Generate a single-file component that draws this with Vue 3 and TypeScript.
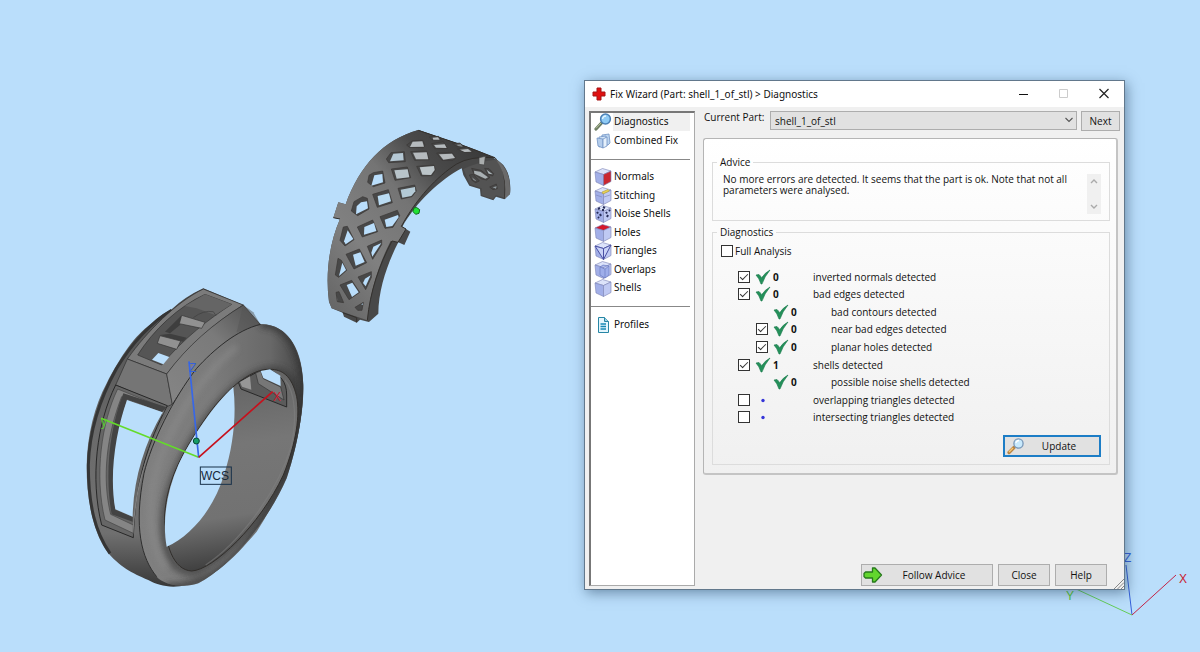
<script setup lang="ts">
import { ref } from 'vue'

interface NavItem { label: string; icon: string; sep?: boolean }
interface Check { label: string; value: string; box: boolean; checked: boolean; sub: boolean; ok: boolean }
interface Cell { rim: string; gap: string; tone: string }

const nav: NavItem[] = [
  { label: 'Diagnostics', icon: 'lens' },
  { label: 'Combined Fix', icon: 'stack' },
  { label: '', icon: '', sep: true },
  { label: 'Normals', icon: 'normals' },
  { label: 'Stitching', icon: 'stitching' },
  { label: 'Noise Shells', icon: 'noise' },
  { label: 'Holes', icon: 'holes' },
  { label: 'Triangles', icon: 'triangles' },
  { label: 'Overlaps', icon: 'overlaps' },
  { label: 'Shells', icon: 'shells' },
  { label: '', icon: '', sep: true },
  { label: 'Profiles', icon: 'page' },
]

const active = ref('Diagnostics')
const part = ref('shell_1_of_stl')
const full = ref(false)

const checks = ref<Check[]>([
  { label: 'inverted normals detected', value: '0', box: true, checked: true, sub: false, ok: true },
  { label: 'bad edges detected', value: '0', box: true, checked: true, sub: false, ok: true },
  { label: 'bad contours detected', value: '0', box: false, checked: false, sub: true, ok: true },
  { label: 'near bad edges detected', value: '0', box: true, checked: true, sub: true, ok: true },
  { label: 'planar holes detected', value: '0', box: true, checked: true, sub: true, ok: true },
  { label: 'shells detected', value: '1', box: true, checked: true, sub: false, ok: true },
  { label: 'possible noise shells detected', value: '0', box: false, checked: false, sub: true, ok: true },
  { label: 'overlapping triangles detected', value: '', box: true, checked: false, sub: false, ok: false },
  { label: 'intersecting triangles detected', value: '', box: true, checked: false, sub: false, ok: false },
])

const sky = '#badefb'
const pale = '#b5babd'
const cells: Cell[] = [
  { rim: '358,66 386,64 394,74 366,74', gap: '368,68 384,67 389,74 370,74', tone: pale },
  { rim: '290,90 308,77 338,76 345,90 340,98 298,97', gap: '308,80 337,79 342,95 300,96', tone: pale },
  { rim: '365,86 400,80 412,100 374,101', gap: '372,90 404,88 410,99 378,98', tone: pale },
  { rim: '428,86 450,84 464,97 440,94', gap: '440,89 452,88 458,95 444,93', tone: '#858a8d' },
  { rim: '442,102 470,96 490,110 464,112', gap: '450,104 474,102 485,110 464,111', tone: pale },
  { rim: '229,132 243,113 283,110 286,140 236,143', gap: '250,116 279,114 281,136 240,139', tone: '#b5c8d4' },
  { rim: '302,110 350,108 358,134 314,136', gap: '309,113 350,112 355,133 318,133', tone: pale },
  { rim: '380,114 426,112 438,128 428,136 396,136', gap: '387,118 426,116 435,129 400,134', tone: pale },
  { rim: '173,202 177,181 190,173 218,168 225,204 190,215', gap: '193,181 217,177 219,202 184,212', tone: sky },
  { rim: '244,162 292,156 302,188 255,196', gap: '253,166 293,163 298,187 260,191', tone: '#b8c4ca' },
  { rim: '320,154 372,150 376,165 366,182 334,183', gap: '329,157 372,153 374,165 363,180 337,179', tone: '#bcc5c9' },
  { rim: '124,288 132,260 158,245 172,250 177,282 143,302', gap: '140,274 153,262 171,259 174,280 138,298', tone: sky },
  { rim: '188,238 235,224 247,263 202,277', gap: '203,243 237,235 243,259 207,271', tone: '#badbf2' },
  { rim: '264,220 314,210 319,228 306,245 274,252', gap: '272,224 315,216 316,229 304,243 277,248', tone: '#b4cad6' },
  { rim: '90,376 100,336 112,334 132,374 105,393', gap: '113,346 130,372 107,388 102,379', tone: sky },
  { rim: '142,336 188,315 203,350 157,366', gap: '163,336 192,324 199,348 162,359', tone: sky },
  { rim: '210,305 262,286 269,302 249,337 225,340', gap: '224,314 264,300 266,307 247,333 229,336', tone: sky },
  { rim: '76,480 84,430 94,436 110,466 86,487', gap: '97,443 108,465 87,483', tone: sky },
  { rim: '108,418 148,402 170,443 132,462', gap: '129,419 151,412 164,441 137,452', tone: sky },
  { rim: '172,394 215,375 215,389 188,433', gap: '190,395 214,384 187,425 184,413', tone: sky },
  { rim: '90,510 125,496 149,532 117,554', gap: '110,510 127,503 146,532 126,546', tone: sky },
  { rim: '144,486 184,470 184,487 167,524', gap: '165,491 182,481 167,514 159,504', tone: sky },
  { rim: '78,532 87,530 101,563 82,560', gap: '80,542 85,558 81,556', tone: '#555' },
  { rim: '135,577 160,562 156,586 143,586', gap: '154,568 158,565 158,570', tone: sky },
  { rim: '478,180 490,178 508,198 497,203 486,196', gap: '486,187 500,198 490,195', tone: '#878c8f' },
  { rim: '485,160 513,166 540,187 530,195 515,192 492,177', gap: '492,167 511,170 534,187 526,191 493,176', tone: '#a9b0b3' },
  { rim: '524,160 537,161 551,176 548,183 533,178', gap: '530,164 548,178 536,176', tone: '#aeb8bd' },
  { rim: '539,216 559,207 562,221 549,224', gap: '548,217 560,214 558,221', tone: '#939da2' },
]
</script>

<template>
  <main class="desk">
    <svg class="scene" viewBox="0 0 1200 652" preserveAspectRatio="xMinYMin slice" aria-hidden="true">
      <defs>
        <linearGradient id="side" x1="0" y1="0" x2="0" y2="1">
          <stop offset="0" stop-color="#4c4c4c" /><stop offset=".5" stop-color="#6b6b6b" /><stop offset=".82" stop-color="#707070" /><stop offset="1" stop-color="#383838" />
        </linearGradient>
        <linearGradient id="rim" x1="0" y1="0" x2="1" y2="0">
          <stop offset="0" stop-color="#808080" /><stop offset=".45" stop-color="#7b7b7b" /><stop offset=".8" stop-color="#686868" /><stop offset="1" stop-color="#454545" />
        </linearGradient>
        <linearGradient id="inner" x1=".2" y1="0" x2=".3" y2="1">
          <stop offset="0" stop-color="#606060" /><stop offset=".4" stop-color="#767676" /><stop offset=".75" stop-color="#727272" /><stop offset="1" stop-color="#3e3e3e" />
        </linearGradient>
        <linearGradient id="bevel" x1="0" y1="1" x2="1" y2="0">
          <stop offset="0" stop-color="#858585" /><stop offset=".6" stop-color="#7a7a7a" /><stop offset="1" stop-color="#4d4d4d" />
        </linearGradient>
        <linearGradient id="band" x1="0" y1="1" x2="1" y2="0">
          <stop offset="0" stop-color="#626262" /><stop offset=".3" stop-color="#808080" /><stop offset=".55" stop-color="#747474" /><stop offset=".72" stop-color="#4a4a4a" /><stop offset="1" stop-color="#333" />
        </linearGradient>
        <filter id="shade" x="-20%" y="-20%" width="140%" height="140%"><feGaussianBlur stdDeviation="9" /></filter>
        <clipPath id="rimClip">
          <path d="M572 148C500 165 430 225 380 280C310 370 245 500 222 595C190 760 215 850 260 905C280 930 345 940 385 925C470 880 590 750 650 610C690 490 700 390 700 330C695 220 650 145 572 148Z" />
        </clipPath>
      </defs>

      <svg x="70" y="275" width="250" height="325" viewBox="0 0 750 975">
        <path fill="url(#side)" d="M400 40L520 90L572 148C660 150 700 230 700 340C700 480 645 640 560 770C490 850 420 930 310 935C280 934 255 925 245 920C190 895 160 885 115 835C65 770 50 660 50 580C50 480 75 390 110 325C150 245 200 175 240 150Q270 120 305 103Q345 65 400 40Z" />
        <path fill="none" stroke="#353535" stroke-width="9" d="M305 106C245 140 185 205 140 280C90 370 58 460 55 570C55 690 75 770 120 835" />
        <path fill="#7b7b7b" d="M400 42L520 90C430 145 350 220 290 297L172 252C230 170 320 80 400 42Z" stroke="#292929" stroke-width="2" />
        <path fill="#555" stroke="#333" stroke-width="2" d="M405 58L485 88C420 130 340 190 275 270L203 240C250 165 325 95 405 58Z" />
        <path fill="#656565" d="M405 58L485 88L435 120L380 100L345 93Z" />
        <path fill="none" stroke="#3e3e3e" stroke-width="2" d="M370 128Q400 105 430 110L438 122" />
        <path fill="#3e3e3e" d="M270 180L300 176L350 188L338 200ZM335 121L330 150L300 175L285 170Z" />
        <path fill="#919191" stroke="#333" stroke-width="2" d="M335 121L405 142L395 160L328 146ZM270 182L332 198L320 223L262 205Z" />
        <path :fill="sky" d="M265 234L298 246L280 268L246 254Z" />
        <path fill="#757575" stroke="#2e2e2e" stroke-width="2" d="M172 252L290 297L307 388L290 395L137 330Z" />
        <path fill="url(#bevel)" stroke="#303030" stroke-width="2" d="M290 297C350 215 430 145 520 90L572 150C470 175 390 260 307 388Z" />
        <path fill="#555" d="M520 90L550 112L572 150L500 172Z" opacity=".5" />
        <path fill="#666" stroke="#282828" stroke-width="3" d="M137 330L292 392C235 500 195 620 190 788L95 750C60 610 80 445 137 330Z" />
        <path fill="#858585" stroke="#444" stroke-width="2" d="M143 342L286 400L278 420L155 365C110 480 95 610 122 718L190 750V775L105 735C72 600 95 440 143 342Z" />
        <path fill="#434343" d="M160 355L290 397L276 412L171 373C142 480 120 590 136 704L188 726V740L125 718C105 610 115 470 160 355Z" />
        <path :fill="sky" d="M171 375L278 412C220 510 190 620 188 725L136 703C117 600 137 470 171 375Z" />
        <path fill="#808080" d="M307 388C250 480 197 610 189 745L190 788C195 640 237 500 310 388Z" />

        <path fill="url(#rim)" d="M572 148C500 165 430 225 380 280C310 370 245 500 222 595C190 760 215 850 260 905C280 930 345 940 385 925C470 880 590 750 650 610C690 490 700 390 700 330C695 220 650 145 572 148Z" />
        <g clip-path="url(#rimClip)">
          <path filter="url(#shade)" fill="none" stroke="#303030" stroke-width="24" d="M600 285C480 300 320 530 288 690C270 810 300 900 380 890C480 840 610 680 670 520C710 350 665 285 600 285" opacity=".6" />
          <path filter="url(#shade)" fill="none" stroke="#303030" stroke-width="20" d="M572 148C650 145 700 230 700 335C700 490 620 690 520 820C460 890 380 940 290 935" opacity=".8" />
          <path filter="url(#shade)" fill="none" stroke="#8c8c8c" stroke-width="18" d="M500 215C380 310 265 500 245 660C235 760 255 830 290 880" opacity=".65" />
        </g>
        <path fill="none" stroke="#2d2d2d" stroke-width="3" d="M572 148C500 165 430 225 380 280C310 370 245 500 222 595C190 760 215 850 260 905" />
        <path fill="url(#inner)" stroke="#302d2a" stroke-width="3" d="M600 283C540 280 460 350 400 440C335 535 290 620 284 720C284 810 310 885 365 888C430 885 570 750 640 600C680 500 690 420 680 365C665 300 635 283 600 283Z" />
        <path fill="none" stroke="#828282" stroke-width="4" d="M645 315C675 350 682 430 663 515C620 660 500 810 407 870" opacity=".5" />
        <path :fill="sky" d="M490 336C430 390 360 495 325 570C290 650 276 740 290 815C360 785 430 705 462 600C490 515 500 420 490 336Z" />
        <path fill="#5b5b5b" stroke="#292929" stroke-width="3" d="M505 322L513 342L650 396V360C650 320 630 300 600 284L560 292Z" />
        <path fill="#969696" d="M510 321L540 304L544 344L516 335Z" />
        <path fill="#777" stroke="#353535" stroke-width="2" d="M557 294L572 288L580 311L632 336L642 375L565 326Z" />
        <path :fill="sky" d="M572 288L600 283L631 302L632 333L580 309Z" />

        <path stroke="#64db2a" stroke-width="5" d="M93 430L386 547" />
        <path stroke="#3767e8" stroke-width="5" d="M357 259L386 547" />
        <path stroke="#c7101c" stroke-width="5" d="M386 547L608 350" />
        <circle cx="379" cy="498" r="9" fill="#159c68" stroke="#064833" stroke-width="3" />
        <rect x="391" y="576" width="93" height="52" fill="none" stroke="#173049" stroke-width="3" />
      </svg>

      <text class="axis blue" x="189" y="372">Z</text>
      <text class="axis red" x="273" y="401">X</text>
      <text class="axis green" x="101" y="426">y</text>
      <text class="wcs" x="201" y="480">WCS</text>

      <svg x="310" y="115" width="220" height="220" viewBox="0 0 660 660">
        <path fill="#484848" d="M325 45C220 75 150 150 107 268L85 262L70 308L90 312C60 380 45 470 57 560L65 580L98 593L102 605L140 623L150 614L177 621L205 596C205 520 235 440 265 382L283 390L301 350L277 335C320 260 390 195 455 160L460 180L478 212L510 222L512 243L550 256L558 245L583 253L600 237Q606 185 580 150Q550 120 450 88Z" />
        <path fill="url(#band)" d="M325 45C220 75 150 150 107 268L85 262L70 308L90 312C60 380 45 470 57 560L65 580L172 616C180 530 205 450 242 378L264 382L288 342L274 334C320 250 380 185 440 147Q480 123 555 128L450 88Z" />
        <path fill="#535353" d="M460 162Q505 140 555 134Q590 150 597 190L584 248L558 241L548 252L515 240V220L480 208Z" />
        <path fill="none" stroke="#33302d" stroke-width="3" d="M172 616C180 530 208 450 246 378L264 382L288 342L274 334C320 250 380 185 440 147Q480 123 555 128Q592 160 584 252M325 46L450 88L555 128M70 308L90 312M98 593L140 608V622" />
        <path fill="#6a6a6a" d="M555 130Q605 165 600 237L584 252Q594 180 555 130Z" />
        <path fill="#aaadad" stroke="#414141" stroke-width="2" d="M507 128L526 124L523 150L507 148Z" />
        <g v-for="(c, i) in cells" :key="i">
          <polygon :points="c.rim" fill="#484848" stroke="#393735" stroke-width="2" />
          <polygon :points="c.gap" :fill="c.tone" />
        </g>
        <path d="M319 277L329 284L327 295L317 298L309 290L311 280Z" fill="#20e335" stroke="#116f1c" stroke-width="3" />
      </svg>

      <g fill="none" stroke-width="1">
        <path stroke="#3560da" d="M1126 565L1132 615" />
        <path stroke="#64cd58" d="M1074 588L1132 615" />
        <path stroke="#c32345" d="M1132 615L1176 575" />
      </g>
      <text class="axis blue" x="1124" y="562">Z</text>
      <text class="axis green" x="1066" y="600">Y</text>
      <text class="axis red" x="1179" y="583">X</text>
    </svg>

    <section class="dialog" aria-label="Fix Wizard">
      <header class="bar">
        <svg class="cross" viewBox="0 0 14 14"><path d="M5 1H9V5H13V9H9V13H5V9H1V5H5Z" fill="#e01010" stroke="#a51515" /></svg>
        <h1>Fix Wizard (Part: shell_1_of_stl) &gt; Diagnostics</h1>
        <button class="win" aria-label="Minimize"><svg viewBox="0 0 12 12"><path d="M1 6.500H10" stroke="#111" /></svg></button>
        <button class="win" aria-label="Maximize" disabled><svg viewBox="0 0 12 12"><path d="M1.500 1.500H9.500V9.500H1.500Z" fill="none" stroke="#ccc" /></svg></button>
        <button class="win" aria-label="Close window"><svg viewBox="0 0 12 12"><path d="M1.500 1L10.500 10M10.500 1L1.500 10" stroke="#222" stroke-width="1.200" /></svg></button>
      </header>

      <div class="body">
        <nav class="side">
          <div class="list">
            <template v-for="(n, i) in nav" :key="i">
              <hr v-if="n.sep">
              <button v-else class="item" :class="{ on: active === n.label }" @click="active = n.label">
                <svg viewBox="0 0 18 18">
                  <g v-if="n.icon === 'lens'">
                    <path d="M2 16L8 9.500" stroke="#6d7d62" stroke-width="3.200" stroke-linecap="round" />
                    <path d="M2 15.300L7 10" stroke="#b5c29a" stroke-width="1" />
                    <circle cx="11.500" cy="6" r="4.900" fill="#8fcbf5" stroke="#4b80b5" stroke-width="1.500" />
                    <path d="M8.500 6Q9 3 12 3" stroke="#e4f5ff" stroke-width="1.300" fill="none" />
                  </g>
                  <g v-else-if="n.icon === 'stack'" stroke="#7193c4" stroke-width=".8" stroke-linejoin="round">
                    <path d="M8 3L15 2L16 11L14 13L7 13Z" fill="#bcd5f0" />
                    <path d="M5 5L12 4V13L5 15Z" fill="#d4e6f8" />
                    <path d="M3 6L9 7V16L4 14Z" fill="#b4cdec" />
                    <path d="M9 7L13 5V14L9 16Z" fill="#e5f0fb" />
                  </g>
                  <g v-else-if="n.icon === 'page'">
                    <path d="M4.500 1.500H10.500L14.500 5.500V16.500H4.500Z" fill="#e4f6fd" stroke="#2786a5" />
                    <path d="M10.500 1.500V5.500H14.500" fill="#9cd0e2" stroke="#2786a5" />
                    <path d="M6.500 8H12M6.500 10.500H12M6.500 13H12" stroke="#1789b5" stroke-width="1.300" />
                  </g>
                  <g v-else stroke-linejoin="round" stroke="#7b82b4" stroke-width=".6">
                    <path d="M1 4L8.500 .500L17 3L9.500 6.500Z" :fill="n.icon === 'holes' ? '#d4182c' : '#dce3fa'" />
                    <path d="M1 4L9.500 6.500V17.500L2 14Z" fill="#a2afe8" />
                    <path d="M9.500 6.500L17 3V13.500L9.500 17.500Z" :fill="n.icon === 'normals' ? '#c92831' : '#bfc9f3'" />
                    <g v-if="n.icon === 'stitching'">
                      <path d="M8 5L14 2.500L15.500 4L9 7Z" fill="#ecd453" stroke="#a9983f" />
                      <path d="M2 8L8 10M10 10L16 8" />
                    </g>
                    <path v-if="n.icon === 'noise'" d="M4 4L6 3M9 2L11 3M8 5L10 5M3 7L4 8.500M6 9L7 11M4 12L5 13M12 7L13 8.500M13 12L14 10M15 5L16 6" stroke="#272d59" stroke-width="2" />
                    <path v-if="n.icon === 'triangles'" d="M1 4L9.500 17.500L17 3L9.500 6.500ZM9.500 6.500V17.500" fill="#c9d2f7" stroke="#4a50a4" stroke-width="1" />
                    <path v-if="n.icon === 'overlaps'" d="M6 6L9 4L15 5V14L11 17L6 14ZM6 6L11 8L15 5M11 8V17" fill="#9eaeea" stroke="#6575bd" />
                  </g>
                </svg>
                <span>{{ n.label }}</span>
              </button>
            </template>
          </div>
        </nav>

        <div class="content">
          <div class="picker">
            <label for="part">Current Part:</label>
            <div class="combo">
              <select id="part" v-model="part"><option>shell_1_of_stl</option></select>
              <svg viewBox="0 0 10 8"><path d="M1.500 2L5 5.500L8.500 2" fill="none" stroke="#555" stroke-width="1.100" /></svg>
            </div>
            <button class="btn">Next</button>
          </div>

          <div class="panel">
            <fieldset class="advice">
              <legend>Advice</legend>
              <div class="note">
                <p>No more errors are detected. It seems that the part is ok. Note that not all parameters were analysed.</p>
                <div class="scroll" aria-hidden="true">
                  <svg viewBox="0 0 10 8"><path d="M2 6L5 3L8 6" fill="none" stroke="#aaa" stroke-width="1.400" /></svg>
                  <svg viewBox="0 0 10 8"><path d="M2 2L5 5L8 2" fill="none" stroke="#aaa" stroke-width="1.400" /></svg>
                </div>
              </div>
            </fieldset>

            <fieldset class="diag">
              <legend>Diagnostics</legend>
              <div class="inner">
                <label class="full"><input v-model="full" type="checkbox">Full Analysis</label>
                <div class="rows">
                  <label v-for="c in checks" :key="c.label" class="row" :class="{ sub: c.sub }">
                    <input v-if="c.box" v-model="c.checked" type="checkbox">
                    <i v-else />
                    <svg viewBox="0 0 16 16">
                      <path v-if="c.ok" d="M1 6L4 5.500Q6 7 6.500 9Q10 3.500 15 1Q9.500 7.500 7 15H6Q4 9 1 6Z" fill="#24905a" stroke="#18784a" stroke-width=".6" />
                      <circle v-else cx="8" cy="8.500" r="1.700" fill="#3535d8" />
                    </svg>
                    <b>{{ c.value }}</b>
                    <span>{{ c.label }}</span>
                  </label>
                </div>
                <button class="btn update">
                  <svg viewBox="0 0 18 18">
                    <path d="M2 15.500L7 10.500" stroke="#b88442" stroke-width="3.200" stroke-linecap="round" />
                    <path d="M2 15L6 11" stroke="#f8c875" stroke-width="1.400" />
                    <circle cx="11.500" cy="6.500" r="4.600" fill="#c8e9fc" stroke="#7797b8" stroke-width="1.300" />
                    <path d="M8.800 6Q9.500 3.500 12 3.500" stroke="#fff" stroke-width="1.300" fill="none" />
                  </svg>
                  <span>Update</span>
                </button>
              </div>
            </fieldset>
          </div>

          <footer class="foot">
            <button class="btn follow">
              <svg viewBox="0 0 20 18"><path d="M2.500 6H9.500V2H12L18.500 9L12 16H9.500V12H2.500L1 10.500V7.500Z" fill="#62d62e" stroke="#277a1c" stroke-width="1.300" stroke-linejoin="round" /></svg>
              <span>Follow Advice</span>
            </button>
            <button class="btn">Close</button>
            <button class="btn">Help</button>
          </footer>
        </div>
      </div>
      <svg class="grip" viewBox="0 0 10 10" aria-hidden="true"><path d="M0 10L10 0M3.500 10L10 3.500M7 10L10 7" stroke="#888" /></svg>
    </section>
  </main>
</template>

<style>
body { margin: 0; }
</style>

<style scoped>
.desk {
  position: relative;
  min-height: 100vh;
  overflow: hidden;
  background: #badefb;
  font-family: "Open Sans", "Noto Sans", sans-serif;
  font-size: 10px;
  line-height: 12px;
  color: #111;
}
.desk * { box-sizing: border-box; }
.scene { position: absolute; inset: 0; width: 100%; height: 100%; }
.axis { font: 12px "Liberation Sans", sans-serif; }
.blue { fill: #3560da; }
.red { fill: #c91c30; }
.green { fill: #58c832; }
.wcs { font: 12px "Liberation Sans", sans-serif; fill: #15293c; }

.dialog {
  position: absolute;
  left: 584px;
  top: 80px;
  width: 541px;
  display: flex;
  flex-direction: column;
  background: #f0f0f0;
  border: 1px solid #62788c;
  box-shadow: 2px 3px 12px rgba(30, 60, 90, .5);
}
.bar { display: flex; align-items: center; height: 26px; padding-left: 7px; background: #fff; }
.cross { width: 14px; height: 14px; margin-right: 4px; }
h1 { flex: 1; margin: 0; font-family: "Noto Sans", sans-serif; font-size: 10px; font-weight: 400; }
button, select { font: inherit; color: inherit; }
.win { width: 40px; height: 26px; padding: 0; border: 0; background: none; display: grid; place-items: center; }
.win svg { width: 12px; height: 12px; }

.body { display: flex; gap: 8px; padding: 4px 4px 3px 4px; }
.side {
  width: 106px;
  flex: none;
  background: #fff;
  border: 2px solid #777;
  border-right: 1px solid #aaa;
  border-bottom: 1px solid #aaa;
  padding-right: 4px;
}
.list { display: grid; grid-template-rows: repeat(12, minmax(0, 1fr)); height: 221px; }
.side hr { width: 100%; align-self: center; margin: 0; border: 0; border-top: 1px solid #888; }
.item { display: flex; align-items: center; padding: 0; border: 0; background: none; font-family: "Noto Sans", sans-serif; text-align: left; white-space: nowrap; }
.item svg { width: 18px; height: 18px; flex: none; margin: 0 1px 0 3px; }
.item span { flex: 1; padding: 1px 0 2px 1px; line-height: 15px; }
.item.on span { background: #f0f0f0; }

.content { flex: 1; min-width: 0; display: flex; flex-direction: column; }
.picker { display: flex; align-items: flex-start; padding-left: 1px; }
.picker label { width: 66px; }
.combo { position: relative; flex: 1; margin-right: 4px; }
.combo select { display: block; width: 100%; height: 19px; padding: 0 4px; border: 1px solid #adadad; border-radius: 0; background: #e1e1e1; appearance: none; }
.combo svg { position: absolute; right: 3px; top: 5px; width: 10px; height: 8px; pointer-events: none; }
.btn { min-width: 39px; height: 20px; padding: 0; border: 1px solid #adadad; background: #e1e1e1; }

.panel {
  margin: 7px 2px 0 0;
  padding: 17px 6px 8px 8px;
  border: 1px solid #b5b5b5;
  border-right: 2px solid #c4c4c4;
  border-bottom: 2px solid #c4c4c4;
  border-radius: 3px;
  background: linear-gradient(#fff, #f0f0f0);
}
fieldset { min-width: 0; margin: 0; padding: 0; border: 1px solid #dcdcdc; }
legend { margin-left: 4px; padding: 0 3px; line-height: 12px; }
.note { display: flex; justify-content: space-between; padding: 6px 8px 6px 10px; }
.advice p { width: 345px; margin: 0; line-height: 11px; }
.scroll { width: 14px; height: 40px; display: flex; flex-direction: column; justify-content: space-between; align-items: center; padding: 3px 0; background: #f0f0f0; }
.scroll svg { width: 10px; height: 8px; }
.diag { margin-top: 5px; }
.inner { padding: 7px 8px 7px 8px; display: flex; flex-direction: column; }
input { appearance: none; width: 12px; height: 12px; flex: none; margin: 0; border: 1px solid #333; background: #fff; display: grid; place-items: center; }
input:checked::before { content: ""; width: 7px; height: 3px; border-left: 1px solid #333; border-bottom: 1px solid #333; rotate: -45deg; translate: 0 -1px; }
.full { display: flex; align-items: center; gap: 2px; }
.rows { display: grid; grid-auto-rows: 1fr; height: 158px; margin-top: 11px; padding-left: 17px; }
.row { display: flex; align-items: center; }
.row.sub { padding-left: 18px; }
.row i { width: 12px; }
.row svg { width: 16px; height: 16px; margin: 0 2px 0 5px; }
.row b { width: 40px; font-weight: 700; }
.update { position: relative; align-self: flex-end; width: 98px; height: 22px; margin-top: 9px; border: 2px solid #1c7dc6; padding-left: 14px; }
.update svg { position: absolute; left: 2px; top: 0; width: 18px; height: 18px; }
.foot { display: flex; justify-content: flex-end; gap: 5px; padding-right: 13px; margin-top: 89px; }
.foot .btn { width: 52px; height: 22px; }
.foot .follow { position: relative; width: 132px; padding-left: 14px; }
.follow svg { position: absolute; left: 1px; top: 1px; width: 20px; height: 18px; }
.grip { position: absolute; right: 0; bottom: 0; width: 10px; height: 10px; }
</style>
